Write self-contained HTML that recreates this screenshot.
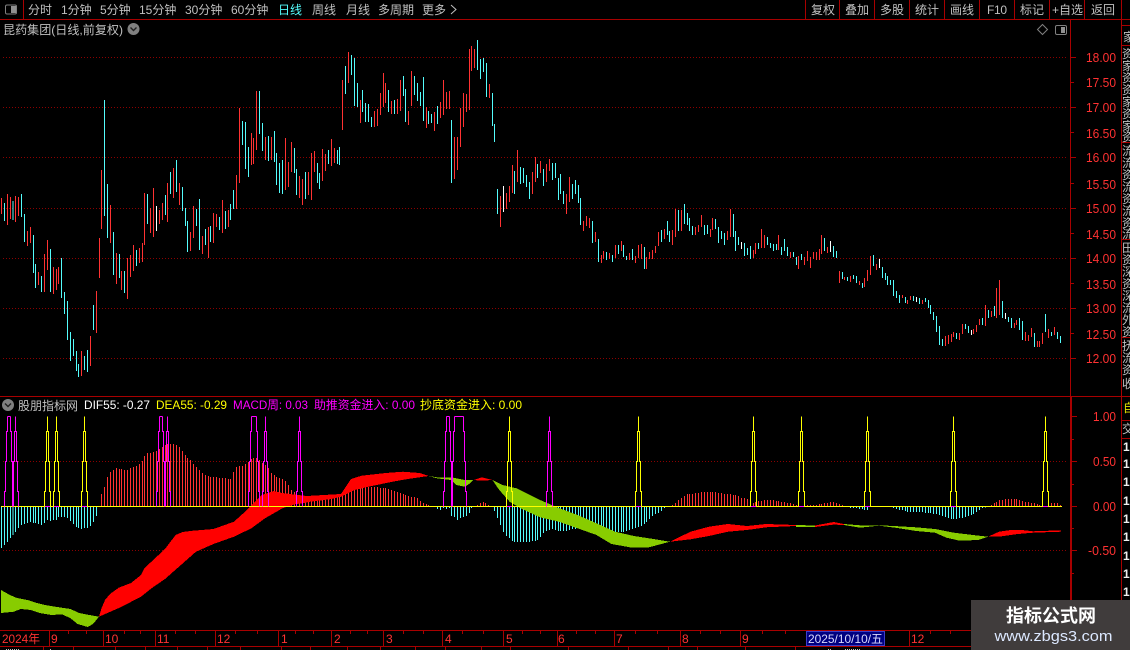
<!DOCTYPE html>
<html><head><meta charset="utf-8"><title>昆药集团</title>
<style>
html,body{margin:0;padding:0;background:#000;width:1130px;height:650px;overflow:hidden}
svg{display:block}
text{font-family:"Liberation Sans","WenQuanYi Zen Hei","Noto Sans CJK SC",sans-serif;font-size:12px}
.g{fill:#c0c0c0}
.r{fill:#ff3232}
.b{stroke:#a80000;fill:none}
.d{stroke:#8c0000;fill:none;stroke-dasharray:1 2}
</style></head><body>
<svg width="1130" height="650" viewBox="0 0 1130 650" xmlns="http://www.w3.org/2000/svg">
<defs>
<path id="l" d="M-3 0V-15H-2V-45H-1V-75H0V-90" fill="none"/>
<path id="h" d="M3 0V-15H2V-45H1V-75H0V-90" fill="none"/>
</defs>
<rect width="1130" height="650" fill="#000"/>

<!-- grid -->
<g shape-rendering="crispEdges">
<path class="d" d="M3 57.5H1066M3 107.5H1066M3 157.5H1066M3 208.5H1066M3 258.5H1066M3 308.5H1066M3 358.5H1066M3 461.5H1066M3 550.5H1066"/>
</g>

<!-- candles -->
<g shape-rendering="crispEdges" fill="none">
<path stroke="#ff3232" d="M1.5 198V214M7.5 194V225M10.5 197V219M15.5 196V222M18.5 197V216M27.5 231V246M30.5 227V243M38.5 272V285M44.5 254V292M47.5 240V270M53.5 267V294M56.5 269V290M58.5 267V284M81.5 351V376M90.5 336V366M96.5 291V333M99.5 238V278M101.5 170V229M110.5 205V243M116.5 253V284M121.5 271V290M127.5 258V299M130.5 255V277M133.5 245V271M139.5 248V263M142.5 243V262M144.5 193V245M150.5 208V233M153.5 188V237M159.5 210V224M162.5 203V220M167.5 183V222M173.5 168V198M179.5 183V205M190.5 232V251M193.5 206V238M202.5 236V254M208.5 227V258M213.5 213V243M216.5 214V227M222.5 200V233M228.5 210V227M236.5 175V209M239.5 108V183M251.5 133V165M253.5 138V164M256.5 91V150M265.5 137V160M271.5 137V160M285.5 138V190M288.5 162V187M291.5 142V172M299.5 176V198M302.5 179V205M308.5 172V195M311.5 153V200M314.5 151V172M322.5 149V181M325.5 154V171M331.5 139V166M334.5 148V163M342.5 80V130M348.5 52V83M360.5 100V123M374.5 111V127M377.5 109V126M380.5 93V115M383.5 73V107M385.5 83V103M391.5 101V114M397.5 99V114M400.5 80V111M408.5 111V125M411.5 71V106M426.5 107V128M434.5 112V131M440.5 102V118M443.5 80V115M446.5 92V109M449.5 91V109M454.5 137V179M457.5 137V170M460.5 108V147M463.5 93V127M466.5 94V112M469.5 49V110M471.5 46V71M474.5 49V68M489.5 84V98M500.5 196V227M506.5 193V209M509.5 186V202M512.5 165V193M517.5 150V182M532.5 172V194M535.5 157V182M540.5 161V173M546.5 164V182M549.5 159V171M566.5 194V214M569.5 177V202M583.5 221V231M586.5 216V226M589.5 218V228M595.5 232V242M601.5 255V263M603.5 251V259M609.5 253V259M615.5 245V258M621.5 241V251M629.5 253V260M635.5 256V263M638.5 245V258M641.5 244V259M646.5 257V269M649.5 252V259M652.5 250V259M655.5 246V253M658.5 232V246M664.5 229V239M672.5 230V245M675.5 209V237M681.5 210V231M695.5 227V235M698.5 225V232M701.5 215V227M710.5 229V237M712.5 218V230M727.5 231V240M730.5 209V237M753.5 250V258M755.5 243V254M761.5 229V248M764.5 235V248M778.5 235V250M790.5 252V258M798.5 256V269M804.5 257V265M807.5 251V261M810.5 257V268M813.5 252V259M816.5 252V260M819.5 249V260M821.5 235V254M827.5 247V253M839.5 271V283M844.5 277V280M850.5 276V282M859.5 281V285M864.5 278V287M867.5 270V281M870.5 256V275M876.5 264V270M902.5 295V298M907.5 300V304M910.5 296V300M922.5 300V304M945.5 336V346M948.5 335V344M951.5 334V342M953.5 332V337M959.5 333V340M962.5 324V334M973.5 329V334M976.5 325V332M979.5 319V325M985.5 305V326M991.5 311V317M996.5 288V318M999.5 280V315M1014.5 323V328M1016.5 320V325M1025.5 332V341M1028.5 335V341M1031.5 328V337M1037.5 341V347M1039.5 341V347M1042.5 333V344M1048.5 329V338M1054.5 327V335"/>
<path stroke="#54fcfc" d="M4.5 203V221M13 201V220M21.5 194V217M24.5 214V242M33.5 235V273M35.5 264V288M41.5 276V292M50.5 249V292M61.5 258V298M64.5 292V314M67.5 301V340M70.5 332V361M73.5 339V356M76.5 351V371M78.5 364V377M84.5 356V370M87.5 350V372M93.5 305V330M104.5 100V216M107.5 184V238M113.5 232V275M119.5 254V278M124.5 271V293M136.5 250V266M147.5 194V224M165.5 195V215M170.5 172V194M176.5 160V192M182.5 187V211M185.5 208V226M187.5 221V252M196.5 209V226M199.5 199V250M205.5 229V245M210.5 226V242M219.5 217V230M225.5 211V229M230.5 204V220M233.5 190V209M242.5 121V145M245.5 122V169M248.5 147V177M259.5 91V134M262.5 123V151M268.5 136V161M274.5 131V162M276.5 153V185M279.5 163V193M282.5 160V194M294.5 148V173M296.5 169V195M305.5 172V199M317.5 163V183M319.5 173V189M328.5 150V164M337.5 150V164M339.5 147V165M345.5 66V94M351.5 55V75M354.5 58V106M357.5 83V107M362.5 90V112M365.5 103V122M368.5 104V122M371.5 117V127M388.5 90V112M394.5 100V114M403.5 76V96M405.5 89V122M414.5 76V95M417.5 83V101M420.5 92V106M423.5 77V121M428.5 111V124M431.5 114V123M437.5 106V124M451.5 120V183M477.5 40V70M480.5 59V79M483.5 58V72M486.5 63V97M492.5 93V126M494.5 124V142M497.5 189V214M514.5 171V194M520.5 167V184M523.5 168V183M526.5 175V187M529.5 182V199M537.5 164V178M543.5 169V186M552.5 163V180M555.5 163V178M558.5 178V200M560.5 174V194M563.5 191V204M572.5 184V199M575.5 180V194M578.5 185V203M580.5 198V225M592.5 221V243M598.5 239V262M606.5 252V260M612.5 255V262M618.5 245V254M623.5 245V257M626.5 256V260M632.5 249V260M644.5 247V269M661.5 230V242M667.5 221V235M669.5 231V242M678.5 210V231M684.5 204V224M687.5 213V225M689.5 218V231M692.5 226V235M704.5 225V235M707.5 225V234M715.5 219V229M718.5 227V243M721.5 231V239M724.5 233V245M733.5 214V237M735.5 231V251M738.5 237V245M744.5 243V256M747.5 248V255M750.5 246V259M758.5 243V249M767.5 237V245M770.5 243V248M773.5 244V251M776.5 244V250M781.5 247V255M784.5 239V251M787.5 247V256M793.5 252V257M796.5 257V265M801.5 254V260M824.5 238V251M833.5 246V257M836.5 251V258M842.5 272V279M847.5 277V281M853.5 275V279M856.5 276V283M862.5 283V288M873.5 255V266M882.5 267V278M885.5 273V280M887.5 276V285M890.5 280V285M893.5 280V296M896.5 291V298M899.5 295V303M905.5 297V303M913.5 296V301M919.5 298V304M925.5 298V302M928.5 300V308M930.5 305V314M933.5 312V320M936.5 316V332M939.5 326V345M942.5 339V346M956.5 333V339M965.5 324V329M968.5 326V333M982.5 318V325M988.5 310V318M994.5 306V316M1002.5 301V318M1008.5 317V322M1011.5 318V328M1019.5 318V330M1022.5 321V340M1034.5 333V347M1045.5 314V332M1051.5 332V336M1057.5 332V339M1060.5 336V343"/>
<path stroke="#ffffff" d="M156.5 206V231M503.5 186V212M741.5 242V249M830.5 241V252M879.5 259V268M916.5 297V302M971.5 330V335M1005.5 313V319"/>
</g>

<!-- histogram -->
<g shape-rendering="crispEdges" fill="none">
<path stroke="#54fcfc" d="M1.5 507V548M4.5 507V545M7.5 507V542M10.5 507V538M13 507V535M15.5 507V532M18.5 507V528M21.5 507V525M24.5 507V524M27.5 507V523M30.5 507V522M33.5 507V523M35.5 507V523M38.5 507V524M41.5 507V525M44.5 507V523M47.5 507V520M50.5 507V521M53.5 507V520M56.5 507V520M58.5 507V517M61.5 507V517M64.5 507V517M67.5 507V518M70.5 507V521M73.5 507V524M76.5 507V527M78.5 507V528M81.5 507V529M84.5 507V528M87.5 507V528M90.5 507V526M93.5 507V522M96.5 507V516M437.5 507V509M440.5 507V510M443.5 507V508M446.5 507V509M449.5 507V508M451.5 507V516M454.5 507V517M457.5 507V520M460.5 507V518M463.5 507V517M466.5 507V516M469.5 507V513M471.5 507V508M494.5 507V511M497.5 507V518M500.5 507V525M503.5 507V532M506.5 507V536M509.5 507V538M512.5 507V541M514.5 507V542M517.5 507V542M520.5 507V542M523.5 507V542M526.5 507V542M529.5 507V542M532.5 507V541M535.5 507V541M537.5 507V540M540.5 507V537M543.5 507V533M546.5 507V531M549.5 507V530M552.5 507V529M555.5 507V530M558.5 507V531M560.5 507V531M563.5 507V531M566.5 507V531M569.5 507V530M572.5 507V529M575.5 507V529M578.5 507V528M580.5 507V528M583.5 507V528M586.5 507V529M589.5 507V529M592.5 507V530M595.5 507V531M598.5 507V531M601.5 507V532M603.5 507V532M606.5 507V532M609.5 507V532M612.5 507V532M615.5 507V532M618.5 507V532M621.5 507V532M623.5 507V532M626.5 507V531M629.5 507V530M632.5 507V529M635.5 507V528M638.5 507V527M641.5 507V526M644.5 507V524M646.5 507V522M649.5 507V519M652.5 507V516M655.5 507V514M658.5 507V513M661.5 507V511M664.5 507V508M850.5 507V508M853.5 507V508M856.5 507V508M859.5 507V509M862.5 507V509M864.5 507V510M867.5 507V510M893.5 507V508M896.5 507V509M899.5 507V510M902.5 507V510M905.5 507V511M907.5 507V512M910.5 507V512M913.5 507V512M916.5 507V512M919.5 507V512M922.5 507V512M925.5 507V513M928.5 507V513M930.5 507V513M933.5 507V514M936.5 507V514M939.5 507V515M942.5 507V516M945.5 507V517M948.5 507V518M951.5 507V519M953.5 507V519M956.5 507V519M959.5 507V518M962.5 507V518M965.5 507V517M968.5 507V516M971.5 507V515M973.5 507V514M976.5 507V512M979.5 507V510M982.5 507V508M985.5 507V507.5"/>
<path stroke="#ff3232" d="M101.5 494V506M104.5 487V506M107.5 477V506M110.5 472V506M113.5 470V506M116.5 468V506M119.5 469V506M121.5 469V506M124.5 470V506M127.5 470V506M130.5 468V506M133.5 467V506M136.5 466V506M139.5 464V506M142.5 461V506M144.5 456V506M147.5 453V506M150.5 453V506M153.5 452V506M156.5 451V506M159.5 449V506M162.5 447V506M165.5 445V506M167.5 444V506M170.5 444V506M173.5 444V506M176.5 445V506M179.5 447V506M182.5 451V506M185.5 455V506M187.5 458V506M190.5 460V506M193.5 464V506M196.5 467V506M199.5 470V506M202.5 473V506M205.5 475V506M208.5 476V506M210.5 477V506M213.5 477V506M216.5 477V506M219.5 478V506M222.5 478V506M225.5 478V506M228.5 479V506M230.5 479V506M233.5 472V506M236.5 467V506M239.5 466V506M242.5 466V506M245.5 464V506M248.5 462V506M251.5 459V506M253.5 458V506M256.5 458V506M259.5 460V506M262.5 463V506M265.5 465V506M268.5 468V506M271.5 473V506M274.5 475V506M276.5 477V506M279.5 478V506M282.5 479V506M285.5 481V506M288.5 485V506M291.5 490V506M294.5 492V506M296.5 494V506M299.5 496V506M302.5 500V506M305.5 500V506M308.5 500V506M311.5 500V506M314.5 500V506M317.5 500V506M319.5 499V506M322.5 499V506M325.5 498V506M328.5 498V506M331.5 497V506M334.5 497V506M337.5 496V506M339.5 495V506M342.5 494V506M345.5 493V506M348.5 492V506M351.5 491V506M354.5 490V506M357.5 489V506M360.5 488V506M362.5 488V506M365.5 487V506M368.5 487V506M371.5 487V506M374.5 487V506M377.5 487V506M380.5 488V506M383.5 488V506M385.5 488V506M388.5 489V506M391.5 490V506M394.5 491V506M397.5 492V506M400.5 493V506M403.5 494V506M405.5 495V506M408.5 496V506M411.5 497V506M414.5 497V506M417.5 498V506M420.5 501V506M423.5 503V506M426.5 504V506M428.5 505V506M477.5 505V506M480.5 503V506M483.5 502V506M485.5 503V506M488.5 505V506M672.5 505V506M675.5 503V506M678.5 500V506M681.5 498V506M684.5 496V506M687.5 494V506M689.5 494V506M692.5 494V506M695.5 493V506M698.5 493V506M701.5 492V506M704.5 492V506M707.5 492V506M710.5 492V506M712.5 492V506M715.5 492V506M718.5 493V506M721.5 493V506M724.5 494V506M727.5 494V506M730.5 494V506M733.5 495V506M735.5 495V506M738.5 496V506M741.5 498V506M744.5 498V506M747.5 499V506M750.5 502V506M753.5 503V506M755.5 502V506M758.5 501V506M761.5 501V506M764.5 500V506M767.5 500V506M770.5 500V506M773.5 500V506M776.5 501V506M778.5 501V506M781.5 502V506M784.5 502V506M787.5 503V506M790.5 503V506M793.5 504V506M796.5 505V506M807.5 505V506M810.5 505V506M813.5 505V506M816.5 505V506M819.5 504V506M821.5 504V506M824.5 503V506M827.5 503V506M830.5 502V506M833.5 502V506M836.5 503V506M839.5 504V506M842.5 505V506M991.5 505V506M994.5 503V506M996.5 502V506M999.5 500V506M1002.5 500V506M1005.5 499V506M1008.5 499V506M1011.5 499V506M1014.5 499V506M1016.5 499V506M1019.5 500V506M1022.5 501V506M1025.5 502V506M1028.5 502V506M1031.5 503V506M1034.5 503V506M1037.5 504V506M1039.5 505V506M1042.5 505V506M1048.5 503V506M1051.5 503V506M1054.5 503V506M1057.5 503V506M1060.5 505V506"/>
</g>

<!-- ribbons -->
<g shape-rendering="crispEdges">
<path fill="#88cc00" d="M1 590L10 595L17 598L27.5 600L36 602.7L45 605L55 606.7L70.6 609L79 613L89.5 615L99 616.7L93 624L87.8 627L77.5 624L70.6 618.3L62 614.3L51.7 615L39.6 613L31 610L20.7 609L13.8 611.7L1 613Z"/>
<path fill="#ff0000" d="M99 616.7L101.6 608L105 600L110 594L118.8 587.7L131 583L141 575L144.6 568L165 549L175.6 535L182.5 532L193 530.7L213.5 529L234 521.7L248 509L261.7 495L273.8 491L282 493L306.5 496L341 494L351 479L361.6 475.7L385.7 473L403 471.7L420 473L428.7 476L423.5 476.7L406 479.3L392.6 481.7L368.5 486.7L354.7 490L341 496.7L330 499.3L310 501.7L303 503.3L296 504L282.4 508.3L265 518.3L251.4 528.3L234 536.7L213.5 544L196 551.7L179 566.7L165 579L151.5 588.3L141 596.7L120.5 607.3Z"/>
<path fill="#88cc00" d="M428.7 476L437 477.3L451 477.3L465 480L473.5 480L470 483.3L465 486.7L456 485L451 480L437 478.3Z"/>
<path fill="#ff0000" d="M473.5 480L482 477.3L492.4 480L482 480.7Z"/>
<path fill="#88cc00" d="M492.4 480L502.7 485L516.5 488.3L540 500L558.8 508L577.6 515L596.5 523.3L615 531.7L634 536L649 538.3L670 541.7L649 547.3L630 547.3L611.5 544L596.5 535L577.6 528.3L558.8 521.7L540 517.3L520 508L509.6 501.7L499.3 490Z"/>
<path fill="#ff0000" d="M670 541.7L690.5 531.7L709 526.7L728 524L747 526L766 524L796 525L796 526L766 527.3L747 530L728 531.7L709 536L690.5 539.3Z"/>
<path fill="#88cc00" d="M796 525L815 525.5L815 527L796 527Z"/>
<path fill="#ff0000" d="M815 525.5L833.6 522L844 524L844 525L833.6 524.6L815 527Z"/>
<path fill="#88cc00" d="M844 524L860 525.3L879 525.3L894 526L916 527.3L935 529L954 532.7L973 535L988 536.7L978.5 540L959.6 540.7L946.5 537.7L935 532.7L916 531L897.5 528L879 525.7L860 527.7L844 525Z"/>
<path fill="#ff0000" d="M988 536.7L999 531.7L1010.5 530L1022 530L1033 531.3L1061 530.3L1061 531.7L1033 532.7L1018 534L999 536.7Z"/>
</g>

<!-- zero line and signals -->
<g fill="none" shape-rendering="crispEdges">
<path stroke="#ffff00" d="M1 506.5H1062"/>
<g stroke="#ff00ff">
<use href="#l" x="7.5" y="506.5"/><use href="#h" x="10.5" y="506.5"/><path d="M7.5 416.5H10.5"/>
<use href="#l" x="15.5" y="506.5"/><use href="#h" x="15.5" y="506.5"/>
<use href="#l" x="159.5" y="506.5"/><use href="#h" x="162.5" y="506.5"/><path d="M159.5 416.5H162.5"/>
<use href="#l" x="167.5" y="506.5"/><use href="#h" x="167.5" y="506.5"/>
<use href="#l" x="251.5" y="506.5"/><use href="#h" x="256.5" y="506.5"/><path d="M251.5 416.5H256.5"/>
<use href="#l" x="265.5" y="506.5"/><use href="#h" x="265.5" y="506.5"/>
<use href="#l" x="299.5" y="506.5"/><use href="#h" x="299.5" y="506.5"/>
<use href="#l" x="446.5" y="506.5"/><use href="#h" x="449.5" y="506.5"/><path d="M446.5 416.5H449.5"/>
<use href="#l" x="454.5" y="506.5"/><use href="#h" x="463.5" y="506.5"/><path d="M454.5 416.5H463.5"/>
<use href="#l" x="549.5" y="506.5"/><use href="#h" x="549.5" y="506.5"/>
</g>
<g stroke="#ffff00">
<use href="#l" x="47.5" y="506.5"/><use href="#h" x="47.5" y="506.5"/>
<use href="#l" x="56.5" y="506.5"/><use href="#h" x="56.5" y="506.5"/>
<use href="#l" x="84.5" y="506.5"/><use href="#h" x="84.5" y="506.5"/>
<use href="#l" x="509.5" y="506.5"/><use href="#h" x="509.5" y="506.5"/>
<use href="#l" x="638.5" y="506.5"/><use href="#h" x="638.5" y="506.5"/>
<use href="#l" x="753.5" y="506.5"/><use href="#h" x="753.5" y="506.5"/>
<use href="#l" x="801.5" y="506.5"/><use href="#h" x="801.5" y="506.5"/>
<use href="#l" x="867.5" y="506.5"/><use href="#h" x="867.5" y="506.5"/>
<use href="#l" x="953.5" y="506.5"/><use href="#h" x="953.5" y="506.5"/>
<use href="#l" x="1045.5" y="506.5"/><use href="#h" x="1045.5" y="506.5"/>
</g>
<path stroke="#ff00ff" d="M45 506.5H50M54 506.5H59M82 506.5H87M507 506.5H512M636 506.5H641M751 506.5H756M799 506.5H804M865 506.5H870M951 506.5H956M1043 506.5H1048"/>
</g>

<!-- frame lines -->
<g shape-rendering="crispEdges" class="b">
<path class="b" d="M0 19.5H1130M23.5 0V19M805.5 0V19M839.5 0V19M874.5 0V19M909.5 0V19M944.5 0V19M979.5 0V19M1014.5 0V19M1049.5 0V19M1084.5 0V19M1121.5 0V650M1121.5 25.5H1130M1121.5 45.5H1130M1121.5 142.5H1130M1121.5 239.5H1130M1121.5 337.5H1130M1121.5 396.5H1130M1121.5 420.5H1130M1121.5 438.5H1130"/>
<path class="b" d="M0 396.5H1121M1070.5 19V396M0 630.5H1130M0 646.5H1130"/>
<path class="b" stroke-width="2" d="M1071 397V630"/>
<path class="b" d="M1071 57.5H1076M1071 82.5H1074M1071 107.5H1076M1071 132.5H1074M1071 157.5H1076M1071 183.5H1074M1071 208.5H1076M1071 233.5H1074M1071 258.5H1076M1071 283.5H1074M1071 308.5H1076M1071 333.5H1074M1071 358.5H1076M1071 416.5H1077M1071 439.5H1074M1071 461.5H1077M1071 484.5H1074M1071 506.5H1077M1071 528.5H1074M1071 550.5H1077M1071 573.5H1074M49.5 631V646M103.5 631V646M155.5 631V646M215.5 631V646M278.5 631V646M331.5 631V646M383.5 631V646M442.5 631V646M503.5 631V646M557.5 631V646M614.5 631V646M680.5 631V646M740.5 631V646M909.5 631V646M68.5 631V634M86.5 631V634M124.5 631V634M140.5 631V634M175.5 631V634M195.5 631V634M235.5 631V634M257.5 631V634M295.5 631V634M313.5 631V634M350.5 631V634M367.5 631V634M403.5 631V634M423.5 631V634M462.5 631V634M483.5 631V634M522.5 631V634M540.5 631V634M576.5 631V634M595.5 631V634M635.5 631V634M657.5 631V634M700.5 631V634M720.5 631V634M762.5 631V634M785.5 631V634M930.5 631V634M950.5 631V634M43.5 646V650M73.5 646V650M115.5 646V650M145.5 646V650M177.5 646V650M207.5 646V650M240.5 646V650M281.5 646V650M310.5 646V650M347.5 646V650M380.5 646V650M415.5 646V650M445.5 646V650M481.5 646V650M510.5 646V650M568.5 646V650M628.5 646V650M668.5 646V650M697.5 646V650M745.5 646V650M795.5 646V650"/>
</g>

<!-- toolbar icon -->
<rect x="5.5" y="5" width="11" height="9" rx="1.5" fill="none" stroke="#808080"/>
<rect x="11" y="6" width="5" height="7" fill="#909090"/>

<!-- toolbar text -->
<text class="g" x="28" y="14">分时</text>
<text class="g" x="61" y="14">1分钟</text>
<text class="g" x="100" y="14">5分钟</text>
<text class="g" x="139" y="14">15分钟</text>
<text class="g" x="185" y="14">30分钟</text>
<text class="g" x="231" y="14">60分钟</text>
<text x="278" y="14" fill="#54fcfc">日线</text>
<text class="g" x="312" y="14">周线</text>
<text class="g" x="346" y="14">月线</text>
<text class="g" x="378" y="14">多周期</text>
<text class="g" x="422" y="14">更多</text>
<path d="M451 5L456 9.5L451 14" fill="none" stroke="#c0c0c0"/>
<text class="g" x="811" y="14">复权</text>
<text class="g" x="845" y="14">叠加</text>
<text class="g" x="880" y="14">多股</text>
<text class="g" x="915" y="14">统计</text>
<text class="g" x="950" y="14">画线</text>
<text class="g" x="987" y="14" textLength="20" lengthAdjust="spacing">F10</text>
<text class="g" x="1020" y="14">标记</text>
<text class="g" x="1052" y="14">+自选</text>
<text class="g" x="1091" y="14">返回</text>

<!-- title row -->
<text class="g" x="3" y="34" textLength="120" lengthAdjust="spacingAndGlyphs">昆药集团(日线,前复权)</text>
<circle cx="133.5" cy="29" r="6" fill="#808080"/>
<path d="M130.5 27.5L133.5 30.5L136.5 27.5" fill="none" stroke="#202020" stroke-width="1.4"/>
<path d="M1042.5 24.5L1047.5 29.5L1042.5 34.5L1037.5 29.5Z" fill="none" stroke="#808080"/>
<rect x="1055.5" y="25.5" width="11" height="9" rx="1.5" fill="none" stroke="#808080"/>
<rect x="1061" y="27" width="4" height="6" fill="#909090"/>

<!-- price axis -->
<g class="r">
<text class="r" x="1086" y="62" font-size="13" textLength="30" lengthAdjust="spacingAndGlyphs" style="font-size:13px">18.00</text>
<text class="r" x="1086" y="87" textLength="30" lengthAdjust="spacingAndGlyphs" style="font-size:13px">17.50</text>
<text class="r" x="1086" y="112" textLength="30" lengthAdjust="spacingAndGlyphs" style="font-size:13px">17.00</text>
<text class="r" x="1086" y="138" textLength="30" lengthAdjust="spacingAndGlyphs" style="font-size:13px">16.50</text>
<text class="r" x="1086" y="162" textLength="30" lengthAdjust="spacingAndGlyphs" style="font-size:13px">16.00</text>
<text class="r" x="1086" y="189" textLength="30" lengthAdjust="spacingAndGlyphs" style="font-size:13px">15.50</text>
<text class="r" x="1086" y="213" textLength="30" lengthAdjust="spacingAndGlyphs" style="font-size:13px">15.00</text>
<text class="r" x="1086" y="239" textLength="30" lengthAdjust="spacingAndGlyphs" style="font-size:13px">14.50</text>
<text class="r" x="1086" y="263" textLength="30" lengthAdjust="spacingAndGlyphs" style="font-size:13px">14.00</text>
<text class="r" x="1086" y="289" textLength="30" lengthAdjust="spacingAndGlyphs" style="font-size:13px">13.50</text>
<text class="r" x="1086" y="313" textLength="30" lengthAdjust="spacingAndGlyphs" style="font-size:13px">13.00</text>
<text class="r" x="1086" y="339" textLength="30" lengthAdjust="spacingAndGlyphs" style="font-size:13px">12.50</text>
<text class="r" x="1086" y="363" textLength="30" lengthAdjust="spacingAndGlyphs" style="font-size:13px">12.00</text>
<text class="r" x="1093" y="421" textLength="23" lengthAdjust="spacingAndGlyphs" style="font-size:13px">1.00</text>
<text class="r" x="1093" y="466" textLength="23" lengthAdjust="spacingAndGlyphs" style="font-size:13px">0.50</text>
<text class="r" x="1093" y="511" textLength="23" lengthAdjust="spacingAndGlyphs" style="font-size:13px">0.00</text>
<text class="r" x="1088" y="555" textLength="28" lengthAdjust="spacingAndGlyphs" style="font-size:13px">-0.50</text>
</g>

<!-- indicator legend -->
<circle cx="8" cy="405" r="6" fill="#808080"/>
<path d="M5 403.5L8 406.5L11 403.5" fill="none" stroke="#202020" stroke-width="1.4"/>
<text class="g" x="18" y="410" textLength="60" lengthAdjust="spacingAndGlyphs">股朋指标网</text>
<text x="84" y="409" fill="#fff" textLength="66" lengthAdjust="spacingAndGlyphs">DIF55: -0.27</text>
<text x="156" y="409" fill="#ffff00" textLength="71" lengthAdjust="spacingAndGlyphs">DEA55: -0.29</text>
<text x="233" y="409" fill="#ff00ff" textLength="75" lengthAdjust="spacingAndGlyphs">MACD周: 0.03</text>
<text x="314" y="409" fill="#ff00ff" textLength="101" lengthAdjust="spacingAndGlyphs">助推资金进入: 0.00</text>
<text x="420" y="409" fill="#ffff00" textLength="102" lengthAdjust="spacingAndGlyphs">抄底资金进入: 0.00</text>

<!-- time axis -->
<g>
<text class="r" x="2" y="643" textLength="38" lengthAdjust="spacingAndGlyphs">2024年</text>
<text class="r" x="51" y="643">9</text>
<text class="r" x="105" y="643">10</text>
<text class="r" x="157" y="643">11</text>
<text class="r" x="217" y="643">12</text>
<text class="r" x="281" y="643">1</text>
<text class="r" x="334" y="643">2</text>
<text class="r" x="386" y="643">3</text>
<text class="r" x="445" y="643">4</text>
<text class="r" x="506" y="643">5</text>
<text class="r" x="558" y="643">6</text>
<text class="r" x="616" y="643">7</text>
<text class="r" x="682" y="643">8</text>
<text class="r" x="742" y="643">9</text>
<text class="r" x="911" y="643">12</text>
</g>
<rect x="806.5" y="631.5" width="78" height="14" fill="#000080" stroke="#3c3cc8"/>
<text x="808" y="643" fill="#d8d8ff" textLength="75" lengthAdjust="spacingAndGlyphs">2025/10/10/五</text>
<path d="M6 649.5H20M50 649.5H52M828 649.5H832M845 649.5H860" stroke="#c0c0c0" stroke-dasharray="1 1" fill="none" shape-rendering="crispEdges"/>

<!-- right strip -->
<g class="g" style="font-size:12px">
<text class="g" x="1123" y="41">家</text>
<text class="g" x="1122" y="58">资</text>
<text class="g" x="1122" y="70">家</text>
<text class="g" x="1122" y="82">资</text>
<text class="g" x="1122" y="94">资</text>
<text class="g" x="1122" y="106">家</text>
<text class="g" x="1122" y="118">资</text>
<text class="g" x="1122" y="130">家</text>
<text class="g" x="1122" y="141">资</text>
<text class="g" x="1122" y="155">流</text>
<text class="g" x="1122" y="167">流</text>
<text class="g" x="1122" y="179">资</text>
<text class="g" x="1122" y="191">流</text>
<text class="g" x="1122" y="203">资</text>
<text class="g" x="1122" y="215">流</text>
<text class="g" x="1122" y="227">资</text>
<text class="g" x="1122" y="238">流</text>
<text class="g" x="1122" y="252">田</text>
<text class="g" x="1122" y="264">资</text>
<text class="g" x="1122" y="276">深</text>
<text class="g" x="1122" y="288">资</text>
<text class="g" x="1122" y="300">深</text>
<text class="g" x="1122" y="312">流</text>
<text class="g" x="1122" y="324">外</text>
<text class="g" x="1122" y="336">资</text>
<text class="g" x="1122" y="350">抚</text>
<text class="g" x="1122" y="362">流</text>
<text class="g" x="1122" y="374">资</text>
<text class="g" x="1122" y="388">收</text>
</g>
<text x="1123" y="412" fill="#e0e000">自</text>
<text class="g" x="1122" y="433">交</text>
<g fill="#f0f0f0" font-weight="bold">
<text x="1123" y="451" fill="#f0f0f0" style="font-weight:bold">1</text>
<text x="1123" y="468" fill="#f0f0f0" style="font-weight:bold">1</text>
<text x="1123" y="486" fill="#f0f0f0" style="font-weight:bold">1</text>
<text x="1123" y="505" fill="#f0f0f0" style="font-weight:bold">1</text>
<text x="1123" y="523" fill="#f0f0f0" style="font-weight:bold">1</text>
<text x="1123" y="541" fill="#f0f0f0" style="font-weight:bold">1</text>
<text x="1123" y="560" fill="#f0f0f0" style="font-weight:bold">1</text>
<text x="1123" y="578" fill="#f0f0f0" style="font-weight:bold">1</text>
<text x="1123" y="596" fill="#f0f0f0" style="font-weight:bold">1</text>
</g>

<!-- watermark -->
<rect x="971" y="600" width="159" height="50" fill="#403c3c"/>
<text x="1006" y="622" fill="#fff" textLength="90" lengthAdjust="spacingAndGlyphs" style="font-size:18px;font-weight:bold;font-family:'Noto Sans CJK SC',sans-serif">指标公式网</text>
<text x="994.5" y="641" fill="#dce8ff" textLength="118" lengthAdjust="spacingAndGlyphs" style="font-size:15px">www.zbgs3.com</text>
</svg>
</body></html>
